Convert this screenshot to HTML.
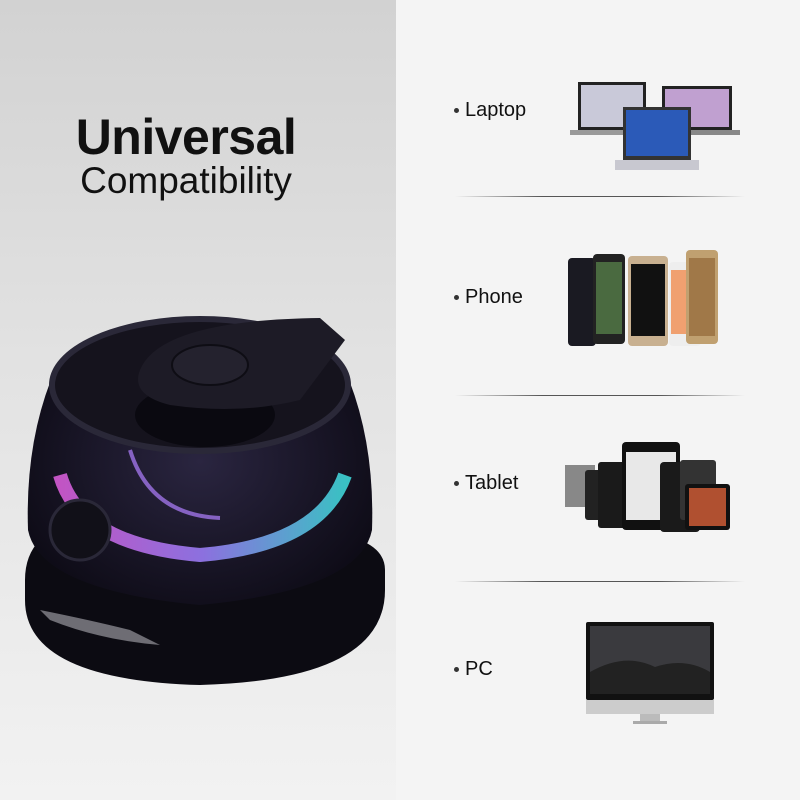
<!DOCTYPE html>
<html><head><meta charset="utf-8"><style>
body{margin:0;width:800px;height:800px;overflow:hidden;background:#f4f4f4;font-family:"Liberation Sans",sans-serif;position:relative}
.left{position:absolute;left:0;top:0;width:396px;height:800px;background:linear-gradient(#d2d2d2 0%,#e2e2e2 45%,#f2f2f2 100%)}
.t1{position:absolute;left:0;width:372px;text-align:center;top:108px;font-size:50px;font-weight:bold;color:#111;letter-spacing:-0.5px}
.t2{position:absolute;left:0;width:372px;text-align:center;top:160px;font-size:37px;color:#111}
.lab{position:absolute;left:454px;font-size:20px;color:#111}
.lab:before{content:"";display:inline-block;width:5px;height:5px;border-radius:50%;background:#333;margin-right:6px;vertical-align:middle}
.hr{position:absolute;left:455px;width:290px;height:1px;background:linear-gradient(90deg,#f4f4f4,#555 30%,#555 70%,#f4f4f4)}
.abs{position:absolute}
</style></head><body>
<div class="left"></div>
<div class="t1">Universal</div>
<div class="t2">Compatibility</div>
<svg class="abs" style="left:0;top:300px" width="396" height="400">
<defs>
<radialGradient id="g1" cx="0.5" cy="0.5" r="0.6"><stop offset="0" stop-color="#2a2540"/><stop offset="1" stop-color="#0c0a14"/></radialGradient>
<linearGradient id="glow" x1="0" x2="1"><stop offset="0" stop-color="#e060e0"/><stop offset="0.5" stop-color="#a080ff"/><stop offset="1" stop-color="#40e0e0"/></linearGradient>
</defs>
<path d="M25 300 Q25 380 200 385 Q385 380 385 290 L385 270 Q385 250 360 240 L40 240 Q25 255 25 280Z" fill="#0c0b12"/>
<path d="M55 70 Q25 140 28 230 Q40 290 200 305 Q360 290 372 230 Q375 140 345 70 Q300 20 200 18 Q100 20 55 70Z" fill="url(#g1)"/>
<ellipse cx="200" cy="85" rx="148" ry="66" fill="#15131d" stroke="#2a2838" stroke-width="6"/>
<ellipse cx="205" cy="115" rx="70" ry="32" fill="#0a0910"/>
<path d="M140 70 Q160 20 320 18 L345 40 L300 100 Q240 115 170 105 Q130 95 140 70Z" fill="#1d1b26"/>
<ellipse cx="210" cy="65" rx="38" ry="20" fill="#24222e" stroke="#0e0d14" stroke-width="2"/>
<path d="M60 175 Q80 245 200 255 Q320 245 345 175" fill="none" stroke="url(#glow)" stroke-width="14" opacity="0.85"/>
<path d="M130 150 Q150 215 220 218" fill="none" stroke="#b080ff" stroke-width="4" opacity="0.7"/>
<circle cx="80" cy="230" r="30" fill="#111018" stroke="#2a2838" stroke-width="3"/>
<path d="M40 310 Q90 320 130 330 L160 345 Q100 340 50 320Z" fill="#cfcfd6" opacity="0.5"/>
</svg>
<div class="lab" style="top:99px">Laptop</div>
<div class="lab" style="top:286px">Phone</div>
<div class="lab" style="top:472px">Tablet</div>
<div class="lab" style="top:658px">PC</div>
<div class="hr" style="top:196px"></div>
<div class="hr" style="top:395px"></div>
<div class="hr" style="top:581px"></div>
<svg class="abs" style="left:565px;top:80px" width="180" height="95">
<rect x="13" y="2" width="68" height="48" fill="#222"/><rect x="16" y="5" width="62" height="42" fill="#c9c9d9"/>
<rect x="5" y="50" width="85" height="5" fill="#999"/>
<rect x="97" y="6" width="70" height="44" fill="#222"/><rect x="100" y="9" width="64" height="38" fill="#c0a0d0"/>
<rect x="92" y="50" width="83" height="5" fill="#888"/>
<rect x="58" y="27" width="68" height="53" fill="#333"/><rect x="61" y="30" width="62" height="46" fill="#2b5ab8"/>
<rect x="50" y="80" width="84" height="10" fill="#c8c8d0"/>
</svg>
<svg class="abs" style="left:565px;top:248px" width="160" height="100">
<rect x="3" y="10" width="28" height="88" rx="4" fill="#1a1a22"/>
<rect x="28" y="6" width="32" height="90" rx="4" fill="#222"/><rect x="31" y="14" width="26" height="72" fill="#4a6a40"/>
<rect x="63" y="8" width="40" height="90" rx="4" fill="#c8b090"/><rect x="66" y="16" width="34" height="72" fill="#111"/>
<rect x="104" y="14" width="32" height="84" rx="4" fill="#eee"/><rect x="106" y="22" width="28" height="64" fill="#f0a070"/>
<rect x="121" y="2" width="32" height="94" rx="4" fill="#c0a070"/><rect x="124" y="10" width="26" height="78" fill="#a07848"/>
</svg>
<svg class="abs" style="left:550px;top:440px" width="190" height="95">
<rect x="15" y="25" width="30" height="42" fill="#888"/>
<rect x="35" y="30" width="30" height="50" rx="3" fill="#222"/>
<rect x="48" y="22" width="30" height="66" rx="3" fill="#1a1a1a"/>
<rect x="72" y="2" width="58" height="88" rx="4" fill="#111"/><rect x="76" y="12" width="50" height="68" fill="#e8e8e8"/>
<rect x="110" y="22" width="40" height="70" rx="4" fill="#1a1a1a"/>
<rect x="130" y="20" width="36" height="60" rx="3" fill="#333"/>
<rect x="135" y="44" width="45" height="46" rx="3" fill="#111"/><rect x="139" y="48" width="37" height="38" fill="#b05030"/>
</svg>
<svg class="abs" style="left:585px;top:622px" width="130" height="105">
<rect x="1" y="0" width="128" height="78" rx="2" fill="#111"/><rect x="5" y="4" width="120" height="68" fill="#3a3a3e"/>
<path d="M5 50 Q40 30 70 45 Q100 35 125 50 L125 72 L5 72Z" fill="#222"/>
<rect x="1" y="78" width="128" height="14" fill="#ccc"/>
<rect x="55" y="92" width="20" height="8" fill="#bbb"/><rect x="48" y="99" width="34" height="3" fill="#aaa"/>
</svg>
</body></html>
